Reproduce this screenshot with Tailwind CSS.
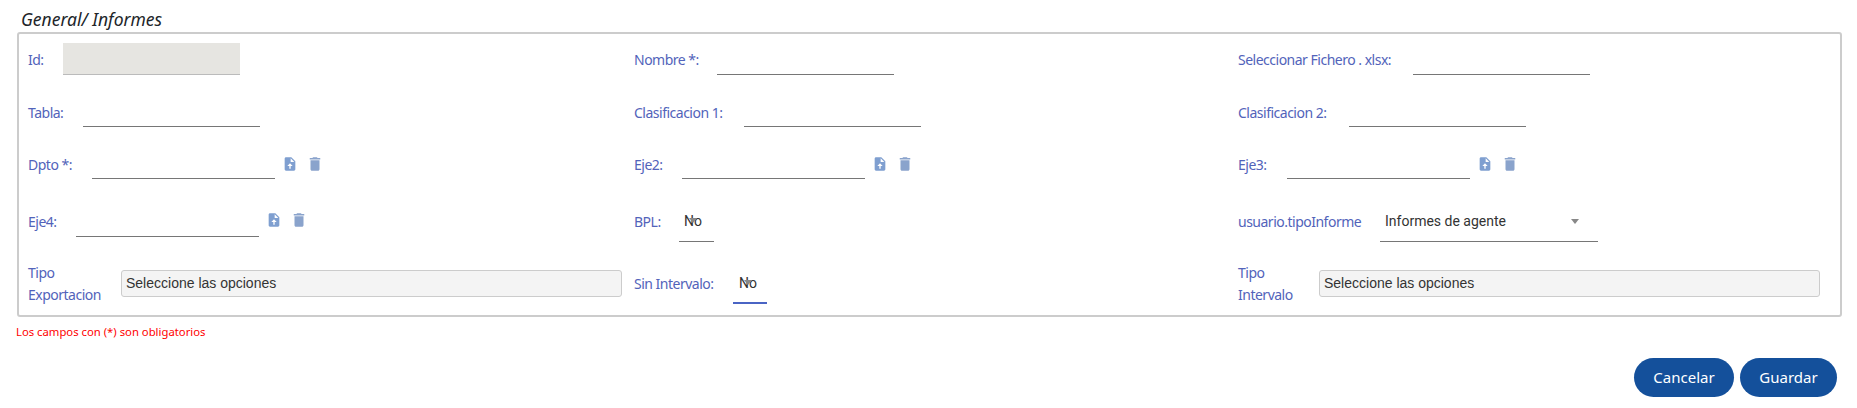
<!DOCTYPE html>
<html>
<head>
<meta charset="utf-8">
<script src="https://cdn.jsdelivr.net/npm/@tailwindcss/browser@4"></script>
</head>
<body class="bg-white font-['Noto_Sans',sans-serif] text-[14px] tracking-[-0.5px] text-[#5263ba] overflow-hidden">
<div class="h-[408px] w-[1857px] pt-[9px] pl-[16px] pr-[15px]">
  <div class="pl-[5px] h-[23px] text-[17.5px] tracking-[0px] italic leading-[20px] text-[#212529]">General/ Informes</div>
  <div class="ml-[1px] border-2 border-[#cccccc] rounded-[3px] h-[285px] pl-[9px] pt-[9px] grid grid-cols-[606px_604px_1fr] grid-rows-[52px_52px_58px_65px_1fr]">
    <!-- row 1 -->
    <div class="flex items-start">
      <label class="w-[35px] h-[32px] leading-[34px]">Id:</label>
      <div class="w-[177px] h-[32px] bg-[#e6e5e1] border-b border-[#bbbbbb]"></div>
    </div>
    <div class="flex items-start">
      <label class="w-[83px] h-[32px] leading-[34px]">Nombre *:</label>
      <div class="w-[177px] h-[32px] border-b border-[#767676]"></div>
    </div>
    <div class="flex items-start">
      <label class="w-[175px] h-[32px] leading-[34px]">Seleccionar Fichero . xlsx:</label>
      <div class="w-[177px] h-[32px] border-b border-[#767676]"></div>
    </div>
    <!-- row 2 -->
    <div class="flex items-start">
      <label class="w-[55px] h-[32px] leading-[36px]">Tabla:</label>
      <div class="w-[177px] h-[32px] border-b border-[#767676]"></div>
    </div>
    <div class="flex items-start">
      <label class="w-[110px] h-[32px] leading-[36px]">Clasificacion 1:</label>
      <div class="w-[177px] h-[32px] border-b border-[#767676]"></div>
    </div>
    <div class="flex items-start">
      <label class="w-[111px] h-[32px] leading-[36px]">Clasificacion 2:</label>
      <div class="w-[177px] h-[32px] border-b border-[#767676]"></div>
    </div>
    <!-- row 3 -->
    <div class="flex items-start">
      <label class="w-[64px] h-[32px] leading-[36px]">Dpto *:</label>
      <div class="w-[183px] h-[32px] border-b border-[#767676]"></div>
      <div class="flex items-center gap-[8px] pl-[7px] pt-[8px]">
        <svg class="w-[16px] h-[16px]" viewBox="0 0 24 24"><path fill="#7f9fd0" d="M14 2H6c-1.1 0-2 .9-2 2v16c0 1.1.9 2 2 2h12c1.1 0 2-.9 2-2V8l-6-6zM13 9V3.5L18.5 9H13z"/><path fill="#fff" d="M12 11l-4 4h3v4h2v-4h3z"/></svg>
        <svg class="w-[18px] h-[18px]" viewBox="0 0 24 24"><path fill="#8aa3cc" d="M6 19c0 1.1.9 2 2 2h8c1.1 0 2-.9 2-2V7H6v12zM19 4h-3.5l-1-1h-5l-1 1H5v2h14V4z"/></svg>
      </div>
    </div>
    <div class="flex items-start">
      <label class="w-[48px] h-[32px] leading-[36px]">Eje2:</label>
      <div class="w-[183px] h-[32px] border-b border-[#767676]"></div>
      <div class="flex items-center gap-[8px] pl-[7px] pt-[8px]">
        <svg class="w-[16px] h-[16px]" viewBox="0 0 24 24"><path fill="#7f9fd0" d="M14 2H6c-1.1 0-2 .9-2 2v16c0 1.1.9 2 2 2h12c1.1 0 2-.9 2-2V8l-6-6zM13 9V3.5L18.5 9H13z"/><path fill="#fff" d="M12 11l-4 4h3v4h2v-4h3z"/></svg>
        <svg class="w-[18px] h-[18px]" viewBox="0 0 24 24"><path fill="#8aa3cc" d="M6 19c0 1.1.9 2 2 2h8c1.1 0 2-.9 2-2V7H6v12zM19 4h-3.5l-1-1h-5l-1 1H5v2h14V4z"/></svg>
      </div>
    </div>
    <div class="flex items-start">
      <label class="w-[49px] h-[32px] leading-[36px]">Eje3:</label>
      <div class="w-[183px] h-[32px] border-b border-[#767676]"></div>
      <div class="flex items-center gap-[8px] pl-[7px] pt-[8px]">
        <svg class="w-[16px] h-[16px]" viewBox="0 0 24 24"><path fill="#7f9fd0" d="M14 2H6c-1.1 0-2 .9-2 2v16c0 1.1.9 2 2 2h12c1.1 0 2-.9 2-2V8l-6-6zM13 9V3.5L18.5 9H13z"/><path fill="#fff" d="M12 11l-4 4h3v4h2v-4h3z"/></svg>
        <svg class="w-[18px] h-[18px]" viewBox="0 0 24 24"><path fill="#8aa3cc" d="M6 19c0 1.1.9 2 2 2h8c1.1 0 2-.9 2-2V7H6v12zM19 4h-3.5l-1-1h-5l-1 1H5v2h14V4z"/></svg>
      </div>
    </div>
    <!-- row 4 -->
    <div class="flex items-start">
      <label class="w-[48px] h-[32px] leading-[34px]">Eje4:</label>
      <div class="w-[183px] h-[32px] border-b border-[#767676]"></div>
      <div class="flex items-center gap-[8px] pl-[7px] pt-[6px]">
        <svg class="w-[16px] h-[16px]" viewBox="0 0 24 24"><path fill="#7f9fd0" d="M14 2H6c-1.1 0-2 .9-2 2v16c0 1.1.9 2 2 2h12c1.1 0 2-.9 2-2V8l-6-6zM13 9V3.5L18.5 9H13z"/><path fill="#fff" d="M12 11l-4 4h3v4h2v-4h3z"/></svg>
        <svg class="w-[18px] h-[18px]" viewBox="0 0 24 24"><path fill="#8aa3cc" d="M6 19c0 1.1.9 2 2 2h8c1.1 0 2-.9 2-2V7H6v12zM19 4h-3.5l-1-1h-5l-1 1H5v2h14V4z"/></svg>
      </div>
    </div>
    <div class="flex items-start">
      <label class="w-[45px] h-[37px] leading-[34px]">BPL:</label>
      <div class="relative w-[35px] h-[37px] border-b border-[#767676] pl-[5px] leading-[32px] tracking-[0px] text-[14px] text-[#333333] font-['Roboto',sans-serif]">No
        <span class="absolute left-[10px] top-[13px] w-0 h-0 border-x-[4px] border-x-transparent border-t-[5px] border-t-[#888888]"></span>
      </div>
    </div>
    <div class="flex items-start">
      <label class="w-[142px] h-[37px] leading-[34px]">usuario.tipoInforme</label>
      <div class="w-[218px] h-[37px] border-b border-[#767676] pl-[5px] flex items-start justify-between pr-[19px] leading-[32px] tracking-[0px] text-[14px] text-[#333333] font-['Roboto',sans-serif]">
        <span>Informes de agente</span>
        <span class="mt-[14px] w-0 h-0 border-x-[4px] border-x-transparent border-t-[5px] border-t-[#888888]"></span>
      </div>
    </div>
    <!-- row 5 -->
    <div class="flex items-start">
      <label class="w-[93px] leading-[22px] -mt-[8px]">Tipo<br>Exportacion</label>
      <div class="w-[501px] h-[27px] bg-[#f4f4f4] border border-[#cccccc] rounded-[3px] pl-[4px] leading-[25px] tracking-[0px] text-[14px] text-[#333333] font-['Liberation_Sans',sans-serif]">Seleccione las opciones</div>
    </div>
    <div class="flex items-start">
      <label class="w-[99px] h-[27px] leading-[27px]">Sin Intervalo:</label>
      <div class="relative w-[34px] h-[34px] border-b-2 border-[#4a64c4] pl-[6px] leading-[26px] tracking-[0px] text-[14px] text-[#333333] font-['Roboto',sans-serif]">No
        <span class="absolute left-[11px] top-[10px] w-0 h-0 border-x-[4px] border-x-transparent border-t-[5px] border-t-[#888888]"></span>
      </div>
    </div>
    <div class="flex items-start">
      <label class="w-[81px] leading-[22px] -mt-[8px]">Tipo<br>Intervalo</label>
      <div class="w-[501px] h-[27px] bg-[#f4f4f4] border border-[#cccccc] rounded-[3px] pl-[4px] leading-[25px] tracking-[0px] text-[14px] text-[#333333] font-['Liberation_Sans',sans-serif]">Seleccione las opciones</div>
    </div>
  </div>
  <div class="mt-[7px] text-[11.3px] tracking-[0px] leading-[16px] text-[#ff0000]">Los campos con (*) son obligatorios</div>
  <div class="mt-[18px] flex justify-end gap-[6px] pr-[5px]">
    <button class="w-[100px] h-[39px] rounded-[20px] bg-[#14509b] text-white text-[15px] tracking-[0px]">Cancelar</button>
    <button class="w-[97px] h-[39px] rounded-[20px] bg-[#14509b] text-white text-[15px] tracking-[0px]">Guardar</button>
  </div>
</div>
</body>
</html>
